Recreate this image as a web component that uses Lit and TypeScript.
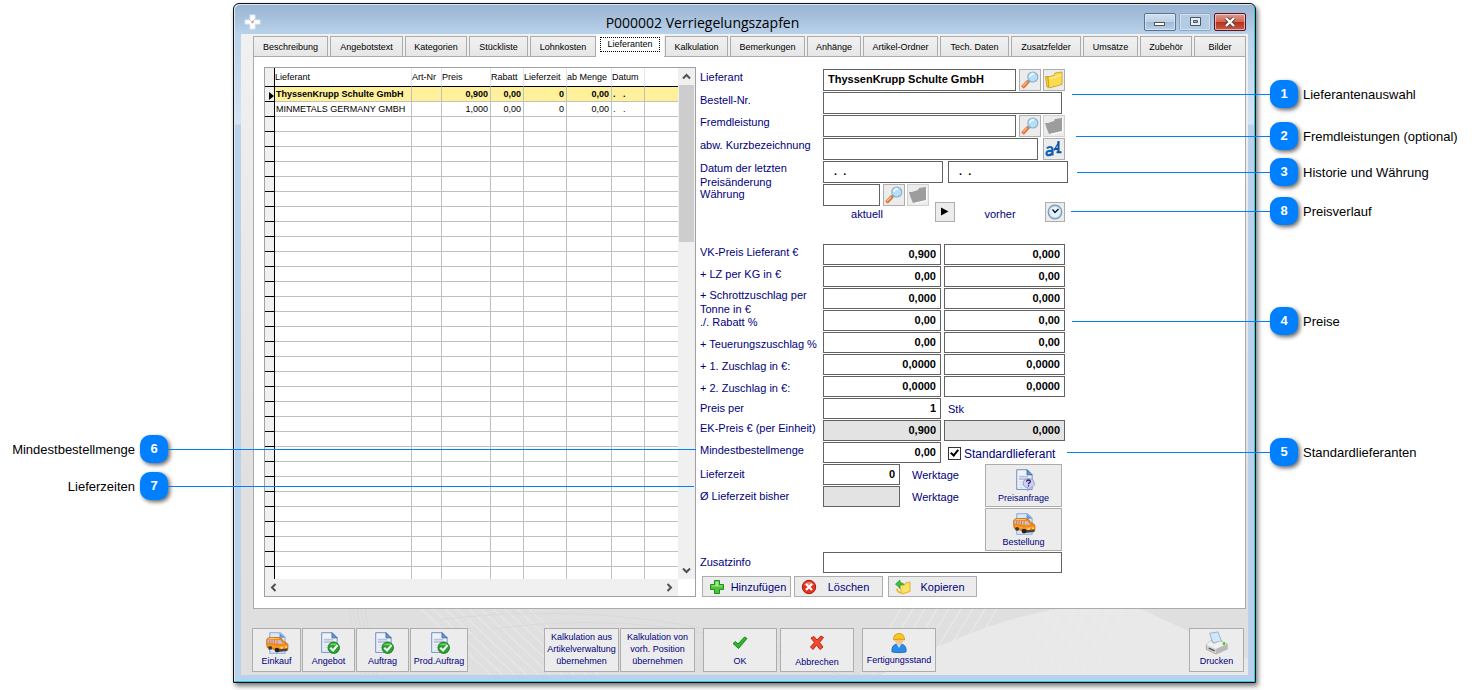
import { LitElement, html, css, svg, nothing, TemplateResult } from "lit";
import { customElement, property } from "lit/decorators.js";
import { classMap } from "lit/directives/class-map.js";
import { styleMap } from "lit/directives/style-map.js";

const page = svg`
  <path d="M5.5 1.5h12l6 6v17h-18z" fill="#eef3fb" stroke="#5f7fb5"/>
  <path d="M17.5 1.5v6h6z" fill="#6f9fd8" stroke="#2f5f9f"/>
  <path d="M8 9.500h11M8 12.500h13" stroke="#b9bfdd" stroke-width="2"/>
  <path d="M8 16h7M8 19h6M8 22h5" stroke="#cdd2e6"/>`;

const van = svg`
  <path d="M5.500 1.500h13l5 5v19h-18z" fill="#dce6f8" stroke="#7f9fd0"/>
  <path d="M17 1.500v6h6.500z" fill="#5f97da"/>
  <path d="M2 9.500q.5-2 3-2.200l11-.3q3.500 0 5.500 4.500l4.500 2.500q1 1 .8 3.500l-.3 4-11 1L2.500 18.500Q1.500 14 2 9.500z" fill="#f58a12" stroke="#b8560a" stroke-width=".8"/>
  <path d="M3 9.800 13.500 10v4.200L3 13.200zM14.800 10l3.200.3 3.500 4.200-6.700-.2z" fill="#c3bfe6"/>
  <path d="M5.500 9.500v4M8.200 9.500v4.200M11 9.500v4.500" stroke="#e06f08"/>
  <path d="M4 8.400 16 8.200" stroke="#ffc35a" stroke-width="1.200" fill="none"/>
  <path d="M3 16l11 2.500 12-1.500" stroke="#ffad45" fill="none"/>
  <circle cx="6" cy="19.200" r="2.300" fill="#3a3a3a"/>
  <path d="M14 21l12.500-1.200-.5 3-11 1.200z" fill="#44444a"/><circle cx="14" cy="21.700" r="2.800" fill="#222"/>
  <path d="M18 19.200l3-.2M23.500 18.600l2-.2" stroke="#ffe98a" stroke-width="1.600"/>`;

const icons: Record<string, TemplateResult> = {
  search: svg`<svg viewBox="0 0 20 20" width="20" height="20">
    <path d="M2.500 17.500 8.500 11" stroke="#e0702c" stroke-width="3.600"/>
    <path d="M3 16.200 8 11" stroke="#ffb884" stroke-width="1.300"/>
    <path d="M7.500 12.500 9.500 10.500" stroke="#8a8f98" stroke-width="2"/>
    <circle cx="12.800" cy="7" r="5" fill="#b4e0fa" stroke="#8fb0cc" stroke-width="1.200"/>
    <path d="M9.800 7a3.200 3.200 0 0 1 4-3" stroke="#fff" stroke-width="1.500" fill="none"/></svg>`,
  folder: svg`<svg viewBox="0 0 20 20" width="20" height="20">
    <path d="M1.500 6.500h2.500l1 10.500H3z" fill="#f4cf3a" stroke="#c79a12" stroke-width=".8"/>
    <path d="M4 7 10 5.500l1-2.500 7-1v12.500L5 18z" fill="#fbdc4e" stroke="#c79a12" stroke-width=".8"/>
    <path d="M5 8.500 11.500 7 17.500 5" stroke="#fff3a8" fill="none"/></svg>`,
  folderOff: svg`<svg viewBox="0 0 20 20" width="20" height="20">
    <path d="M3 8 12 5.500 19 3v13L7 19z" fill="#fff"/>
    <path d="M1 7h3l6-2 1-2 7-1v13L5 18 2.500 12z" fill="#9d9d9d"/></svg>`,
  fonts: svg`<svg viewBox="0 0 20 20" width="20" height="20" fill="none" stroke="#1660b4">
    <path d="M3 9.500q1-1.500 3-1.500 2.500 0 2.500 2.500v6M8.500 12q-6-.5-6 2.200 0 2 2.300 2 2.700 0 3.700-2.700" stroke-width="2.200"/>
    <path d="M10 11.500 14.800 3" stroke-width="1.400"/>
    <path d="M14.500 2v11M10.500 10h4M12.500 13.200h5" stroke="#0f4f9c" stroke-width="2"/></svg>`,
  clock: svg`<svg viewBox="0 0 18 18" width="18" height="18">
    <circle cx="9" cy="9" r="6.800" fill="#bfe0f6" stroke="#7f93ac" stroke-width="1.200"/>
    <circle cx="9" cy="9" r="5" fill="#e4f4ff"/><path d="M6.500 6.500 9 9.500l3.500-3.500" fill="none" stroke="#111" stroke-width="1.300"/></svg>`,
  play: svg`<svg viewBox="0 0 18 18" width="18" height="18"><path d="M5 4.500 12.500 8.500 5 12.500z" fill="#000"/></svg>`,
  inquiry: svg`<svg viewBox="0 0 28 27" width="24" height="24">${page}
    <path d="M13 17a6.500 5.500 0 1 1 9 5.500L18.500 26v-3.500A6 5.500 0 0 1 13 17z" fill="#cfcff4" stroke="#8f8fc8"/>
    <path d="M17 15.500q.3-2 2.300-2t2.200 1.800q0 1.200-2.200 2.200v1M19.300 19.500v1.500" stroke="#1d1d60" stroke-width="1.500" fill="none"/></svg>`,
  van: svg`<svg viewBox="0 0 28 27" width="24" height="24">${van}</svg>`,
  pageOk: svg`<svg viewBox="0 0 28 27" width="24" height="24">${page}
    <circle cx="19.500" cy="19" r="6.700" fill="#26a32b" stroke="#12781a"/>
    <path d="M14.500 16a6 5 0 0 1 10 0" fill="#6dd06a"/>
    <path d="m15.500 19 3.200 3.200L24 16" stroke="#fff" stroke-width="2.500" fill="none"/></svg>`,
  ok: svg`<svg viewBox="0 0 16 14" width="16" height="14"><path d="m1 7.500 2.500-2L6 8l6.500-7L15 2.500 6.500 12.500z" fill="#2fb52f" stroke="#168a1c"/></svg>`,
  cancel: svg`<svg viewBox="0 0 16 16" width="16" height="16"><path d="m2 3 3-1.500L8 5l4-4 2.500 1.500L10.500 7.500 14 12l-3 2.500L7.500 10 4 14.500 1.500 12 5.500 7.500z" fill="#f4492c" stroke="#bd2413"/></svg>`,
  worker: svg`<svg viewBox="0 0 18 22" width="18" height="22">
    <path d="M2 20q-1-7 5-8h4q6 1 5 8-7 1.500-14 0z" fill="#2b8be6" stroke="#1a62b4" stroke-width=".8"/>
    <path d="m6.500 12 2.500 4 2.500-4z" fill="#bfe0fb"/>
    <circle cx="9" cy="8.500" r="4" fill="#f7c48c"/>
    <path d="M3.500 8q0-6.500 5.500-6.500T14.500 8q-5.500-2-11 0z" fill="#fbc61e" stroke="#c98f0a" stroke-width=".8"/></svg>`,
  printer: svg`<svg viewBox="0 0 26 26" width="26" height="24">
    <path d="M5 2.500 14 1l4 10-9 3z" fill="#cfe6fb" stroke="#98b0c8"/>
    <path d="M1.500 15 7 10l2 3 8-2 7 3v5.500L12 25 1.500 20z" fill="#d3d3d3" stroke="#989898" stroke-width=".8"/>
    <path d="M1.500 15 12 19.500 24 14l-7-3-8 3-2.500-3.500z" fill="#f1f1f1"/>
    <path d="m4 18.500 6.500 3" stroke="#555" stroke-width="1.500"/><path d="m12 19.500 12-5.500v5.500L12 25z" fill="#b9b9b9"/>
    <circle cx="20.500" cy="13.700" r="1.500" fill="#32d21e"/></svg>`,
  add: svg`<svg viewBox="0 0 16 16" width="16" height="16"><path d="M5.500 1.500h5v4h4v5h-4v4h-5v-4h-4v-5h4z" fill="#4fc43a" stroke="#1f8f1c"/><path d="M6.500 2.500h3v4h4v1h-11v-1h4z" fill="#a5e68f"/></svg>`,
  remove: svg`<svg viewBox="0 0 16 16" width="16" height="16"><circle cx="8" cy="8" r="6.700" fill="#e2331f" stroke="#a81a10"/><path d="M3 6a5.500 5 0 0 1 10 0z" fill="#f4806c"/><path d="m5 5 6 6M11 5l-6 6" stroke="#fff" stroke-width="2.200"/></svg>`,
  copy: svg`<svg viewBox="0 0 18 16" width="18" height="16"><path d="M5.500 6.500l5-.5 1-2 4.500-1v9.500L8 15z" fill="#fbe069" stroke="#d8a818" stroke-width=".8"/><path d="M1.500 5 6 1v2.500q3 0 4 2-4-.5-4 1.500v2.500z" fill="#3fbd3a" stroke="#239022" stroke-width=".6"/><path d="M3 9.500q0 3.500 4 4.500" stroke="#e6b93a" stroke-width="1.800" fill="none"/></svg>`,
};

const tabs: [string, number][] = [
  ["Beschreibung", 75], ["Angebotstext", 73], ["Kategorien", 62], ["Stückliste", 59], ["Lohnkosten", 66],
  ["Lieferanten", 68], ["Kalkulation", 63], ["Bemerkungen", 75], ["Anhänge", 54], ["Artikel-Ordner", 75],
  ["Tech. Daten", 69], ["Zusatzfelder", 70], ["Umsätze", 55], ["Zubehör", 52], ["Bilder", 52],
];

@customElement("supplier-table")
export class SupplierTable extends LitElement {
  static styles = css`
    :host { display: flex; flex-direction: column; contain: size; border: 1px solid #a0a0a0; background: #fff; overflow: hidden; }
    .main { flex: 1; display: flex; min-height: 0; }
    .view { flex: 1; overflow: hidden; }
    table { width: 100%; table-layout: fixed; border-collapse: separate; border-spacing: 0; font-size: 9px; line-height: 14px; }
    th, td { box-sizing: border-box; height: 15px; padding: 0 1px; white-space: nowrap; overflow: hidden; }
    th { height: 19px; font-weight: normal; text-align: left; border-bottom: 1px solid #000; border-right: 1px solid #dfe8f2; padding: 0 1px 0 0; }
    td { border-right: 1px solid #c0c0c0; border-bottom: 1px solid #c0c0c0; }
    .mark { background: #f0f0f0; border-color: #000; padding: 0; text-align: right; line-height: 0; }
    .mark svg { padding-top: 3px; }
    .sel td:not(.mark) { background: #fff09b; font-weight: bold; }
    .num { text-align: right; padding-right: 2px; }
    .last { border-right: 0; }
    .c0 { width: 10px; } .c1 { width: 137px; } .c2 { width: 30px; } .c3 { width: 49px; } .c4 { width: 33px; }
    .c5 { width: 43px; } .c6 { width: 45px; } .c7 { width: 33px; }
    .vbar { width: 17px; background: #f0f0f0; display: flex; flex-direction: column; }
    .hbar { height: 17px; background: #f0f0f0; display: flex; justify-content: space-between; margin-right: 17px; }
    .track { flex: 1; }
    .thumb { height: 33%; margin: 0 1px; background: #cdcdcd; }
    .arrow { border: 0; padding: 0; width: 17px; height: 17px; background: none; display: grid; place-items: center; }
  `;

  private arrow(label: string, d: string) {
    return html`<button class="arrow" aria-label=${label}><svg width="9" height="9" viewBox="0 0 9 9"><path d=${d} fill="none" stroke="#505050" stroke-width="2"/></svg></button>`;
  }

  render() {
    const rows = [
      ["ThyssenKrupp Schulte GmbH", "", "0,900", "0,00", "0", "0,00", ".\u00a0\u00a0\u00a0.", ""],
      ["MINMETALS GERMANY GMBH", "", "1,000", "0,00", "0", "0,00", ".\u00a0\u00a0\u00a0.", ""],
      ...Array.from({ length: 48 }, () => Array(8).fill("") as string[]),
    ];
    const heads = ["Lieferant", "Art-Nr", "Preis", "Rabatt", "Lieferzeit", "ab Menge", "Datum", ""];
    return html`
      <div class="main">
        <div class="view">
          <table>
            <thead><tr><th class="mark c0"></th>${heads.map((h, i) => html`<th class="c${i + 1} ${i === 7 ? "last" : ""}">${h}</th>`)}</tr></thead>
            <tbody>${rows.map((r, n) => html`<tr class=${n === 0 ? "sel" : ""}>
              <td class="mark">${n === 0 ? html`<svg width="5" height="8" viewBox="0 0 5 8"><path d="M0 0 5 4 0 8z"/></svg>` : nothing}</td>
              ${r.map((c, i) => html`<td class=${classMap({ num: i > 1 && i < 6, last: i === 7 })}>${c}</td>`)}</tr>`)}
            </tbody>
          </table>
        </div>
        <div class="vbar">${this.arrow("Nach oben", "M1 6.500 4.500 3 8 6.500")}
          <div class="track"><div class="thumb"></div></div>${this.arrow("Nach unten", "M1 2.500 4.500 6 8 2.500")}</div>
      </div>
      <div class="hbar">${this.arrow("Nach links", "M6.500 1 3 4.500 6.500 8")}${this.arrow("Nach rechts", "M2.500 1 6 4.500 2.500 8")}</div>`;
  }
}

@customElement("supplier-form")
export class SupplierForm extends LitElement {
  static styles = css`
    :host { display: block; font-size: 11px; line-height: 14px; color: #00007c; }
    .row { display: grid; grid-template-columns: 123px auto; align-items: start; height: 22px; }
    .tall { height: 23px; }
    .name { padding-top: 1px; }
    .tight .name { padding-top: 0; }
    .mid .name { padding-top: 3px; }
    .low .name { padding-top: 5px; }
    .up .name { padding-top: 0; align-self: center; }
    .fields { display: flex; align-items: center; gap: 3px; }
    input.box { box-sizing: border-box; height: 21px; margin: 0; padding: 0 4px 1px; border: 1px solid #636363; border-radius: 0;
      background: #fff; font: bold 11px/14px "Liberation Sans", Arial, sans-serif; color: #000; }
    .tall input.box { height: 22px; padding-bottom: 2px; }
    input.num { text-align: right; }
    input.grey { background: #e3e3e3; }
    input.w118 { width: 118px; } input.w121 { width: 121px; } input.w120 { width: 120px; } input.w193 { width: 193px; }
    input.w239 { width: 239px; } input.w215 { width: 215px; } input.w56 { width: 57px; } input.w77 { width: 77px; }
    button { box-sizing: border-box; padding: 0; border: 1px solid #adadad; background: #ececec; font: inherit; color: inherit; }
    .sq { width: 22px; height: 22px; display: grid; place-items: center; }
    .sq.off { border-color: #d0d0d0; }
    .pair { display: flex; gap: 2px; }
    .wide { gap: 5px; }
    .small { width: 20px; height: 20px; display: grid; place-items: center; }
    .legend { display: grid; grid-template-columns: 88px 44px 1fr 20px; justify-items: center; align-items: center;
      width: 242px; height: 20px; margin: -5px 0 22px 123px; }
    .legend span { padding-top: 4px; }
    .take { justify-self: end; }
    .unit { padding-left: 4px; }
    .unit.far { padding-left: 9px; }
    .check { display: flex; align-items: center; gap: 3px; padding: 2px 0 0 4px; font-size: 12px; }
    .check input { appearance: none; box-sizing: border-box; width: 13px; height: 13px; margin: 0; border: 1px solid #333; background: #fff; display: grid; }
    .check input:checked::after { content: ""; width: 3px; height: 6px; margin: 0 0 0 3px; border: solid #000; border-width: 0 2px 2px 0; transform: rotate(40deg); }
    .times { display: flex; gap: 27px; height: 88px; }
    .left { flex: none; width: 258px; }
    .stack { display: flex; flex-direction: column; gap: 1px; }
    .big { width: 77px; height: 43px; font-size: 9px; line-height: 12px; display: flex; flex-direction: column; align-items: center; justify-content: center; }
    .big span, .act span { display: block; }
    .acts { display: flex; gap: 3px; padding: 2px 0 0 2px; }
    .act { width: 89px; height: 21px; display: grid; grid-template-columns: 27px 1fr; place-items: center; padding-right: 3px; }
    .act:last-child { margin-left: 2px; }
    .act.l span { padding-right: 4px; }
  `;

  private box(id: string, width: number, value = "", kind = "", label = "") {
    return html`<input class="box w${width} ${kind}" id=${id} .value=${value} aria-label=${label || nothing} ?readonly=${kind.includes("grey")}>`;
  }
  private sq(icon: string, label: string, off = false) {
    return html`<button class="sq ${off ? "off" : ""}" aria-label=${label} ?disabled=${off}>${icons[icon]}</button>`;
  }
  private row(id: string, label: string, kind: string, fields: unknown) {
    return html`<div class="row ${kind}"><label class="name" for=${id}>${label}</label><div class="fields">${fields}</div></div>`;
  }
  private prices(id: string, label: string, value: string, before: string, kind = "", grey = "") {
    return this.row(id, label, kind, html`${this.box(id, 118, value, "num " + grey)}${this.box(id + "-alt", 121, before, "num " + grey, label + " vorher")}`);
  }

  render() {
    return html`
      ${this.row("name", "Lieferant", "tall", html`${this.box("name", 193, "ThyssenKrupp Schulte GmbH")}<span class="pair">${this.sq("search", "Lieferant suchen")}${this.sq("folder", "Lieferant öffnen")}</span>`)}
      ${this.row("order", "Bestell-Nr.", "tall", this.box("order", 239))}
      ${this.row("extern", "Fremdleistung", "tall tight", html`${this.box("extern", 193)}<span class="pair">${this.sq("search", "Fremdleistung suchen")}${this.sq("folderOff", "Fremdleistung öffnen", true)}</span>`)}
      ${this.row("short", "abw. Kurzbezeichnung", "tall tight", html`<span class="fields wide">${this.box("short", 215)}${this.sq("fonts", "Sprachen")}</span>`)}
      ${this.row("date", "Datum der letzten Preisänderung", "tall tight", html`<span class="fields wide">${this.box("date", 120, "  .  .")}${this.box("date2", 120, "  .  .", "", "Vorheriges Datum")}</span>`)}
      ${this.row("curr", "Währung", "tall mid", html`${this.box("curr", 56)}<span class="pair">${this.sq("search", "Währung suchen")}${this.sq("folderOff", "Währung öffnen", true)}</span>`)}
      <div class="legend"><span>aktuell</span><button class="small take" aria-label="Übernehmen">${icons.play}</button><span>vorher</span><button class="small" aria-label="Preisverlauf">${icons.clock}</button></div>
      ${this.prices("vk", "VK-Preis Lieferant €", "0,900", "0,000")}
      ${this.prices("lz", "+ LZ per KG in €", "0,00", "0,00")}
      ${this.prices("scrap", "+ Schrottzuschlag per Tonne in €", "0,000", "0,000", "tight")}
      ${this.prices("disc", "./. Rabatt %", "0,00", "0,00", "low")}
      ${this.prices("infl", "+ Teuerungszuschlag %", "0,00", "0,00", "low")}
      ${this.prices("z1", "+ 1. Zuschlag in €:", "0,0000", "0,0000", "low")}
      ${this.prices("z2", "+ 2. Zuschlag in €:", "0,0000", "0,0000", "low")}
      ${this.row("per", "Preis per", "mid", html`${this.box("per", 118, "1", "num")}<span class="unit">Stk</span>`)}
      ${this.prices("ek", "EK-Preis € (per Einheit)", "0,900", "0,000", "", "grey")}
      ${this.row("min", "Mindestbestellmenge", "", html`${this.box("min", 118, "0,00", "num")}<label class="check"><input type="checkbox" checked>Standardlieferant</label>`)}
      <div class="times">
        <div class="left">
          ${this.row("time", "Lieferzeit", "mid", html`${this.box("time", 77, "0", "num")}<span class="unit far">Werktage</span>`)}
          ${this.row("avg", "Ø Lieferzeit bisher", "mid", html`${this.box("avg", 77, "", "grey")}<span class="unit far">Werktage</span>`)}
        </div>
        <div class="stack">
          <button class="big">${icons.inquiry}<span>Preisanfrage</span></button>
          <button class="big">${icons.van}<span>Bestellung</span></button>
        </div>
      </div>
      ${this.row("info", "Zusatzinfo", "mid", this.box("info", 239))}
      <div class="acts">
        <button class="act">${icons.add}<span>Hinzufügen</span></button>
        <button class="act l">${icons.remove}<span>Löschen</span></button>
        <button class="act l">${icons.copy}<span>Kopieren</span></button>
      </div>`;
  }
}

@customElement("call-out")
export class CallOut extends LitElement {
  @property({ type: Number }) number = 0;
  @property() text = "";
  @property({ type: Boolean, reflect: true }) flip = false;
  static styles = css`
    :host { display: flex; align-items: center; height: 28px; font-size: 13px; color: #000; pointer-events: none; }
    :host([flip]) { flex-direction: row-reverse; }
    .line { flex: 1; height: 1px; background: #007fff; }
    .pill { width: 28px; height: 28px; border-radius: 10px; background: #007fff; box-shadow: 2px 2px 4px #0009; color: #fff;
      font-weight: bold; line-height: 28px; text-align: center; }
    .text { box-sizing: border-box; width: 174px; padding: 0 0 0 5px; white-space: nowrap; }
    :host([flip]) .text { width: 140px; padding: 0 5px 0 0; text-align: right; }
  `;
  render() {
    return html`<span class="line"></span><span class="pill">${this.number}</span><span class="text">${this.text}</span>`;
  }
}

@customElement("app-root")
export class AppRoot extends LitElement {
  static styles = css`
    :host { display: flex; position: relative; box-sizing: border-box; min-height: 100vh; padding: 3px 216px 8px 233px; background: #fff;
      font-family: "Liberation Sans", Arial, sans-serif; color: #000; overflow: hidden; }
    .window { flex: 1; min-width: 0; display: flex; flex-direction: column; box-sizing: border-box; padding: 0 7px 7px; border: 1px solid #101010;
      border-radius: 6px 6px 0 0; background: linear-gradient(#98b3d1, #b9d1ea 30px, #d5e4f3 120px, #b9d1ea 121px);
      box-shadow: inset -1px -1px 0 #22cfe6, inset 1px 1px 0 #dce9f6, 2px 3px 5px #0008; }
    .title { display: grid; grid-template-columns: 26px 1fr 110px; align-items: center; height: 30px; }
    .title h1 { margin: 0; padding: 8px 0 0; text-align: center; font: 14px/20px "Open Sans", "Noto Sans", sans-serif; }
    .logo { margin: 5px 0 0 2px; }
    .ctrls { display: flex; justify-content: flex-end; gap: 3px; padding: 6px 2px 0 0; }
    .ctrl { box-sizing: border-box; width: 32px; height: 18px; padding: 0; border: 1px solid #5c7390; border-radius: 2px; display: grid; place-items: center;
      background: linear-gradient(#d3e1f0, #bcd0e6 50%, #9fb9d6 50%, #b9d1ea); box-shadow: inset 0 0 0 1px #e6effa99; }
    .ctrl.dim { border-color: #8fa8c4; background: #b4cbe4; }
    .ctrl.close { border-color: #5a1420; background: linear-gradient(#e39a8c, #cf6553 50%, #b5301c 50%, #cc5a41); }
    .client { flex: 1; display: flex; flex-direction: column; padding: 2px 2px 0 12px; background: linear-gradient(#f1f1f1, #e0e0e0 70%, #dfdfdf); position: relative; }
    .deco { position: absolute; inset: auto 0 0 0; width: 100%; height: 66px; }
    .tabs { display: flex; align-items: flex-end; gap: 2px; }
    .tab { flex: 1 1 auto; box-sizing: border-box; height: 20px; padding: 0; border: 1px solid #ababab; border-bottom: 0; background: linear-gradient(#f1f1f1, #e6e6e6);
      font: 9px/18px "Liberation Sans", Arial, sans-serif; color: #000; }
    .tab.on { height: 23px; margin: -3px -1px -1px -2px; padding: 0 3px; border-color: #fff #fff transparent; background: #fff; position: relative; }
    .tab.on span { display: block; border: 1px dotted #000; line-height: 13px; margin-bottom: 3px; }
    .panel { flex: 1; display: grid; grid-template-columns: minmax(0, 432px) 1fr; gap: 4px; padding: 10px 10px 11px; border: 1px solid #ababab; background: #fff; }
    .form { padding-top: 2px; }
    .foot { display: flex; align-items: flex-end; gap: 1px; margin-left: -1px; padding: 19px 2px 3px 0; position: relative; }
    .btn { box-sizing: border-box; height: 44px; padding: 0 0 2px; border: 1px solid #adadad; background: #ececec; font: 9px/12px "Liberation Sans", Arial, sans-serif;
      color: #00007c; display: flex; flex-direction: column; align-items: center; justify-content: center; }
    .roomy { gap: 5px; padding-top: 5px; }
    .end { margin-left: auto; }
    .group { display: flex; gap: 1px; margin-left: 75px; }
    .gap8 { margin-left: 7px; } .gap3 { margin-left: 2px; }
    .note { position: absolute; }
    .right { right: 0; }
    .leftside { left: 0; }
  `;

  private notes = [
    { n: 1, t: "Lieferantenauswahl", y: 94, x: 1072 },
    { n: 2, t: "Fremdleistungen (optional)", y: 136, x: 1076 },
    { n: 3, t: "Historie und Währung", y: 172, x: 1077 },
    { n: 8, t: "Preisverlauf", y: 211, x: 1071 },
    { n: 4, t: "Preise", y: 321, x: 1072 },
    { n: 5, t: "Standardlieferanten", y: 452, x: 1067 },
    { n: 6, t: "Mindestbestellmenge", y: 449, w: 696 },
    { n: 7, t: "Lieferzeiten", y: 486, w: 694 },
  ];

  private btn(label: unknown, width: number, icon = "", kind = "") {
    return html`<button class="btn ${kind}" style=${styleMap({ width: width + "px" })}>${icon ? icons[icon] : nothing}<span>${label}</span></button>`;
  }

  render() {
    const hatch = (from: number, n: number, step: number, dx: number) =>
      Array.from({ length: n }, (_, i) => svg`<path d="M${from + i * step} 66l${dx}-66"/>`);
    return html`
      <main class="window">
        <header class="title">
          <svg class="logo" width="18" height="18" viewBox="0 0 18 18"><path d="M7 2h5v5h5v4h-5v5H7v-5H2V7h5z" fill="#fff" stroke="#dceaf6"/><circle cx="9.500" cy="9" r="1.200" fill="#ef8a5a"/><path d="M6 6l2 2M12 6l-2 2" stroke="#b9cfe4"/></svg>
          <h1>P000002 Verriegelungszapfen</h1>
          <div class="ctrls">
            <button class="ctrl" aria-label="Minimieren"><svg width="12" height="10" viewBox="0 0 12 10"><rect x=".5" y="5.500" width="10" height="3" fill="#fff" stroke="#555"/></svg></button>
            <button class="ctrl dim" aria-label="Maximieren"><svg width="11" height="10" viewBox="0 0 11 10"><path d="M.5.5h10v8H.5z" fill="#e8eef5" stroke="#4c5665"/><path d="M3.500 3.500h4v2h-4z" fill="#9fb9d6" stroke="#4c5665"/></svg></button>
            <button class="ctrl close" aria-label="Schließen"><svg width="12" height="10" viewBox="0 0 12 10"><path d="m2 1 8 8M10 1 2 9" stroke="#4d3a3a" stroke-width="4"/><path d="m2 1 8 8M10 1 2 9" stroke="#fff" stroke-width="2.400"/></svg></button>
          </div>
        </header>
        <div class="client">
          <svg class="deco" viewBox="0 0 1007 66" preserveAspectRatio="none" fill="none" stroke="#ececec">
            <path d="M640 66Q800-20 900 0L1007 50V66z" fill="#e9e9e9" stroke="none"/>
            ${hatch(620, 9, 12, 40)}
            <g stroke="#d9d9d9">${hatch(120, 5, 4, -12)}</g><g>${hatch(250, 10, 12, -70)}${hatch(780, 7, 12, 30)}</g>
            <path d="M200 10Q420-15 620 66M250 20Q440-5 600 66" stroke="#d9d9d9"/></svg>
          <nav class="tabs" role="tablist" aria-label="Artikel">
            ${tabs.map(([t, w]) => html`<button role="tab" aria-selected=${t === "Lieferanten"} class=${classMap({ tab: true, on: t === "Lieferanten" })} style=${styleMap({ width: w + "px" })}><span>${t}</span></button>`)}
          </nav>
          <section class="panel"><supplier-table></supplier-table><supplier-form class="form"></supplier-form></section>
          <footer class="foot">
            ${this.btn("Einkauf", 49, "van")}${this.btn("Angebot", 53, "pageOk")}${this.btn("Auftrag", 53, "pageOk")}${this.btn("Prod.Auftrag", 58, "pageOk")}
            <div class="group">
              ${this.btn(html`Kalkulation aus<br>Artikelverwaltung<br>übernehmen`, 75)}${this.btn(html`Kalkulation von<br>vorh. Position<br>übernehmen`, 75)}
            </div>
            ${this.btn("OK", 74, "ok", "roomy gap8")}${this.btn("Abbrechen", 74, "cancel", "roomy gap3")}${this.btn("Fertigungsstand", 74, "worker", "gap8")}
            ${this.btn("Drucken", 55, "printer", "end")}
          </footer>
        </div>
      </main>
      ${this.notes.map((c) => html`<call-out class="note ${c.x ? "right" : "leftside"}" .number=${c.n} .text=${c.t} .flip=${!c.x}
        style=${styleMap({ top: c.y - 14 + "px", left: c.x ? c.x + "px" : "0", width: c.w ? c.w + "px" : "auto" })}></call-out>`)}`;
  }
}
